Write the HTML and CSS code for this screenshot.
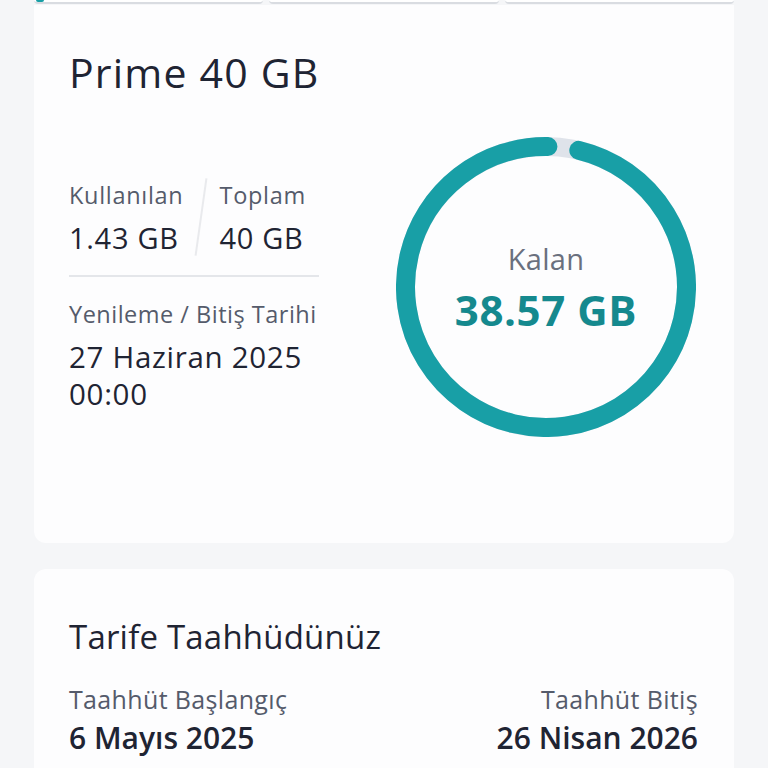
FILE: index.html
```html
<!DOCTYPE html>
<html lang="tr">
<head>
<meta charset="utf-8">
<link rel="stylesheet" href="styles.css">
</head>
<body>
<div class="page">
  <div class="tabs">
    <div class="tab tab-active"><span class="tab-mark"></span></div>
    <div class="tab"></div>
    <div class="tab"></div>
  </div>
  <section class="card card-usage">
    <h1 class="title">Prime 40 GB</h1>
    <div class="usage-body">
      <div class="details">
        <div class="pair">
          <div class="pair-item">
            <div class="label">Kullanılan</div>
            <div class="value">1.43 GB</div>
          </div>
          <div class="slash"></div>
          <div class="pair-item">
            <div class="label">Toplam</div>
            <div class="value">40 GB</div>
          </div>
        </div>
        <div class="rule"></div>
        <div class="label label-renew">Yenileme / Bitiş Tarihi</div>
        <div class="value value-date">27 Haziran 2025<br>00:00</div>
      </div>
      <div class="ring">
        <svg class="ring-svg" width="300" height="300" viewBox="0 0 300 300">
          <circle cx="150" cy="150" r="140.5" fill="none" stroke="#dfe3ea" stroke-width="19"/>
          <circle cx="150" cy="150" r="140.5" fill="none" stroke="#189fa6" stroke-width="19" stroke-linecap="round" stroke-dasharray="851.2 882.8" transform="rotate(-76.5 150 150)"/>
        </svg>
        <div class="ring-text">
          <div class="ring-label">Kalan</div>
          <div class="ring-value">38.57 GB</div>
        </div>
      </div>
    </div>
  </section>
  <section class="card card-commit">
    <h2 class="subtitle">Tarife Taahhüdünüz</h2>
    <div class="commit-row">
      <div class="commit-item">
        <div class="c-label">Taahhüt Başlangıç</div>
        <div class="c-value">6 Mayıs 2025</div>
      </div>
      <div class="commit-item commit-right">
        <div class="c-label">Taahhüt Bitiş</div>
        <div class="c-value">26 Nisan 2026</div>
      </div>
    </div>
  </section>
</div>
</body>
</html>
```

FILE: styles.css
```css
* { box-sizing: border-box; }
html, body {
  margin: 0;
  padding: 0;
  background: #f5f6f8;
  font-family: "Open Sans", "Noto Sans", sans-serif;
  color: #1f2433;
}
.page {
  width: 768px;
  height: 768px;
  overflow: hidden;
  padding: 0 34px;
}
.tabs {
  display: flex;
  gap: 6px;
  height: 4px;
}
.tab {
  flex: 1;
  height: 4px;
  background: #ffffff;
  border-bottom: 2px solid #d9dce1;
  border-radius: 0 0 6px 6px;
  position: relative;
}
.tab-mark {
  position: absolute;
  left: 2px;
  top: 0;
  width: 8px;
  height: 2px;
  background: #189fa6;
  border-radius: 0 0 2px 2px;
}
.card {
  background: #fdfdfe;
  border-radius: 12px;
}
.card-usage {
  margin-top: 1px;
  height: 538px;
  padding: 43px 38px 0 35px;
  border-radius: 0 0 12px 12px;
}
.title {
  margin: 0;
  font-size: 41px;
  line-height: 48px;
  font-weight: 500;
  letter-spacing: 1.2px;
}
.usage-body {
  display: flex;
  justify-content: space-between;
  margin-top: 41px;
}
.details {
  width: 252px;
  padding-top: 43px;
}
.pair {
  display: flex;
  align-items: flex-start;
}
.pair-item {
  display: flex;
  flex-direction: column;
}
.slash {
  width: 2px;
  height: 78px;
  margin: -2px 17px 0 17px;
  background: #e9eaed;
  transform: rotate(8deg);
}
.label {
  font-size: 23.5px;
  line-height: 30px;
  color: #555b6b;
  letter-spacing: 0.7px;
}
.value {
  margin-top: 10px;
  font-size: 29px;
  line-height: 36px;
  color: #1f2433;
  letter-spacing: 0.7px;
}
.rule {
  margin-top: 19px;
  width: 250px;
  height: 2px;
  background: #e4e6ea;
}
.label-renew {
  margin-top: 22px;
  white-space: nowrap;
  letter-spacing: 0.5px;
}
.value-date {
  margin-top: 9px;
  line-height: 37px;
  font-size: 29.5px;
  letter-spacing: 0.7px;
  white-space: nowrap;
}
.ring {
  position: relative;
  width: 300px;
  height: 300px;
}
.ring-svg {
  display: block;
}
.ring-text {
  position: absolute;
  inset: 0;
  display: flex;
  flex-direction: column;
  align-items: center;
  justify-content: center;
  padding-top: 2px;
}
.ring-label {
  font-size: 29px;
  line-height: 36px;
  color: #6a707e;
  letter-spacing: 0.3px;
}
.ring-value {
  font-size: 42px;
  line-height: 50px;
  font-weight: 700;
  color: #15898e;
  margin-top: 8px;
  letter-spacing: 0.6px;
}
.card-commit {
  margin-top: 26px;
  height: 260px;
  padding: 48px 36px 0 35px;
}
.subtitle {
  margin: 0;
  font-size: 33px;
  line-height: 40px;
  font-weight: 400;
  letter-spacing: 0.2px;
}
.commit-row {
  display: flex;
  justify-content: space-between;
  margin-top: 27px;
}
.commit-right {
  text-align: right;
}
.c-label {
  font-size: 25px;
  line-height: 30px;
  color: #555b6b;
  letter-spacing: 0.35px;
}
.c-value {
  margin-top: 6px;
  font-size: 30px;
  line-height: 36px;
  font-weight: 600;
  letter-spacing: 0;
}
```
